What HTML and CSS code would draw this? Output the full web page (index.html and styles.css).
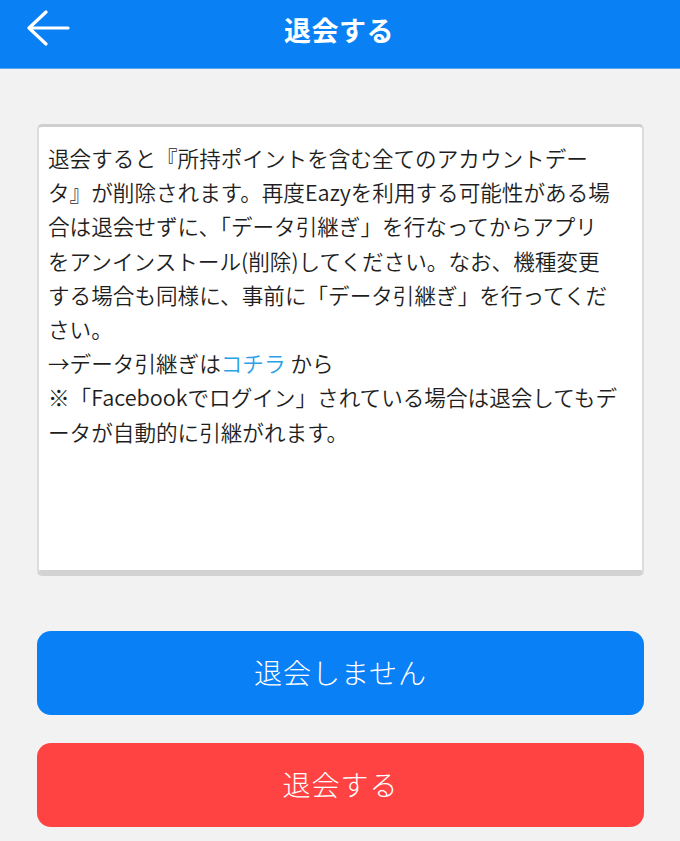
FILE: index.html
```html
<!DOCTYPE html>
<html lang="ja">
<head>
<meta charset="utf-8">
<title>退会する</title>
<link rel="stylesheet" href="styles.css">
</head>
<body>
<header class="topbar">
  <button class="back" aria-label="戻る">
    <svg width="44" height="40" viewBox="0 0 44 40"><path d="M42 18H3M20 2 3 18l17 16" fill="none" stroke="#fff" stroke-width="3.2" stroke-linecap="round" stroke-linejoin="round"/></svg>
  </button>
  <h1 class="title">退会する</h1>
</header>
<main class="content">
  <div class="notice">
    <p>退会すると『所持ポイントを含む全てのアカウントデー<br>タ』が削除されます。再度Eazyを利用する可能性がある場<br>合は退会せずに、「データ引継ぎ」を行なってからアプリ<br>をアンインストール(削除)してください。なお、機種変更<br>する場合も同様に、事前に「データ引継ぎ」を行ってくだ<br>さい。<br>→データ引継ぎは<a class="link" href="#">コチラ</a> から<br>※「Facebookでログイン」されている場合は退会してもデ<br>ータが自動的に引継がれます。</p>
  </div>
  <div class="actions">
    <button class="btn btn-stay">退会しません</button>
    <button class="btn btn-leave">退会する</button>
  </div>
</main>
</body>
</html>
```
FILE: styles.css
```css
* { box-sizing: border-box; }
html, body { margin: 0; padding: 0; }
body {
  background: #f2f2f2;
  font-family: "Noto Sans CJK JP", "Noto Sans", sans-serif;
  color: #222;
  width: 680px;
  height: 841px;
  overflow: hidden;
}
.topbar {
  height: 69px;
  background: #0981f5;
  display: flex;
  align-items: center;
  justify-content: center;
  position: relative;
  border-bottom: 1px solid #5aa6ee;
}
.back {
  position: absolute;
  left: 26px;
  top: 10px;
  background: none;
  border: 0;
  padding: 0;
  width: 44px;
  height: 40px;
}
.back svg { display: block; }
.title {
  margin: 0 2px 10px 0;
  color: #fff;
  font-size: 27px;
  font-weight: 700;
  letter-spacing: 0.5px;
}
.content {
  padding: 55px 36px 0 37px;
}
.notice {
  height: 452px;
  background: #fff;
  border: 2px solid #dcdcdc;
  border-top: 3px solid #cfcfcf;
  border-bottom: 6px solid #d3d3d3;
  border-radius: 5px;
  padding: 14px 0 0 9px;
}
.notice p {
  margin: 0;
  font-size: 21.6px;
  line-height: 34.2px;
  color: #1e1e1e;
  font-weight: 350;
  white-space: nowrap;
}
.link {
  color: #2a9fe6;
  text-decoration: none;
}
.actions {
  margin-top: 55px;
  display: flex;
  flex-direction: column;
  gap: 28px;
}
.btn {
  height: 84px;
  border: 0;
  border-radius: 14px;
  color: #fff;
  font-family: "Noto Sans CJK JP", "Noto Sans", sans-serif;
  font-size: 28px;
  font-weight: 300;
  letter-spacing: 1px;
  padding: 0 0 2px;
}
.btn-stay { background: #0a80f7; }
.btn-leave { background: #ff4343; }
```
